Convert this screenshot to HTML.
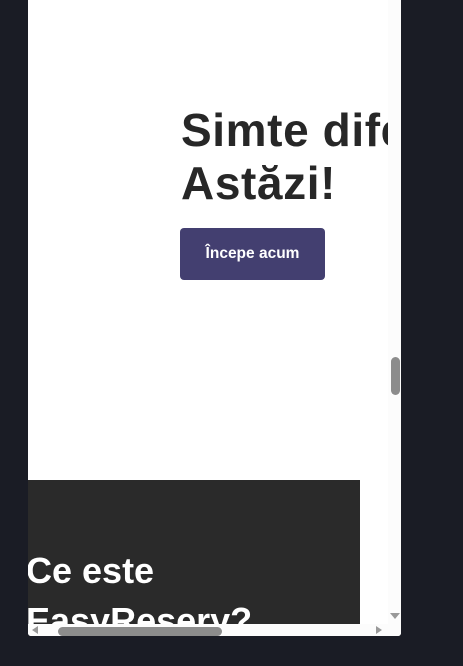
<html><head><style>
body{margin:0;background:#1a1c25;width:463px;height:666px;position:relative;overflow:hidden;font-family:"Liberation Sans",sans-serif}
#f{position:absolute;left:28px;top:0;width:373px;height:636px;background:#fff;border-radius:0 0 3px 3px;overflow:hidden}
#vp{position:absolute;left:0;top:0;width:360px;height:624px;overflow:hidden}
h1{position:absolute;left:153px;top:104px;margin:0;font-size:46px;line-height:53px;color:#272727;white-space:nowrap;font-weight:bold;letter-spacing:0.6px}
.btn{position:absolute;left:152px;top:228px;width:145px;height:52px;background:#433f70;border-radius:4px;color:#fff;font-weight:bold;font-size:15.5px;text-align:center;line-height:52px}
#dark{position:absolute;left:0;top:480px;width:332px;height:144px;background:#2a2a2a}
h2{position:absolute;left:-2px;top:546px;margin:0;color:#fff;font-size:36px;line-height:50px;font-weight:bold;white-space:nowrap}
#vs{position:absolute;left:360px;top:0;width:13px;height:624px;background:#fcfcfc}
#vt{position:absolute;left:363px;top:357px;width:9px;height:38px;background:#8c8c8c;border-radius:5px}
#hs{position:absolute;left:0;top:624px;width:373px;height:12px;background:#fcfcfc}
#ht{position:absolute;left:30px;top:627px;width:164px;height:9px;background:#8c8c8c;border-radius:5px}
</style></head><body>
<div id="f">
<div id="vp">
<h1>Simte diferența<br>Astăzi!</h1>
<div class="btn">Începe acum</div>
<div id="dark"></div>
<h2>Ce este<br>EasyResery?</h2>
</div>
<div id="vs"></div><div id="vt"></div>
<div style="position:absolute;left:362px;top:613px;width:0;height:0;border-left:5px solid transparent;border-right:5px solid transparent;border-top:6px solid #999"></div>
<div id="hs"></div><div id="ht"></div>
<div style="position:absolute;left:4px;top:626px;width:0;height:0;border-top:4px solid transparent;border-bottom:4px solid transparent;border-right:6px solid #999"></div>
<div style="position:absolute;left:348px;top:626px;width:0;height:0;border-top:4px solid transparent;border-bottom:4px solid transparent;border-left:6px solid #999"></div>
</div>
</body></html>
